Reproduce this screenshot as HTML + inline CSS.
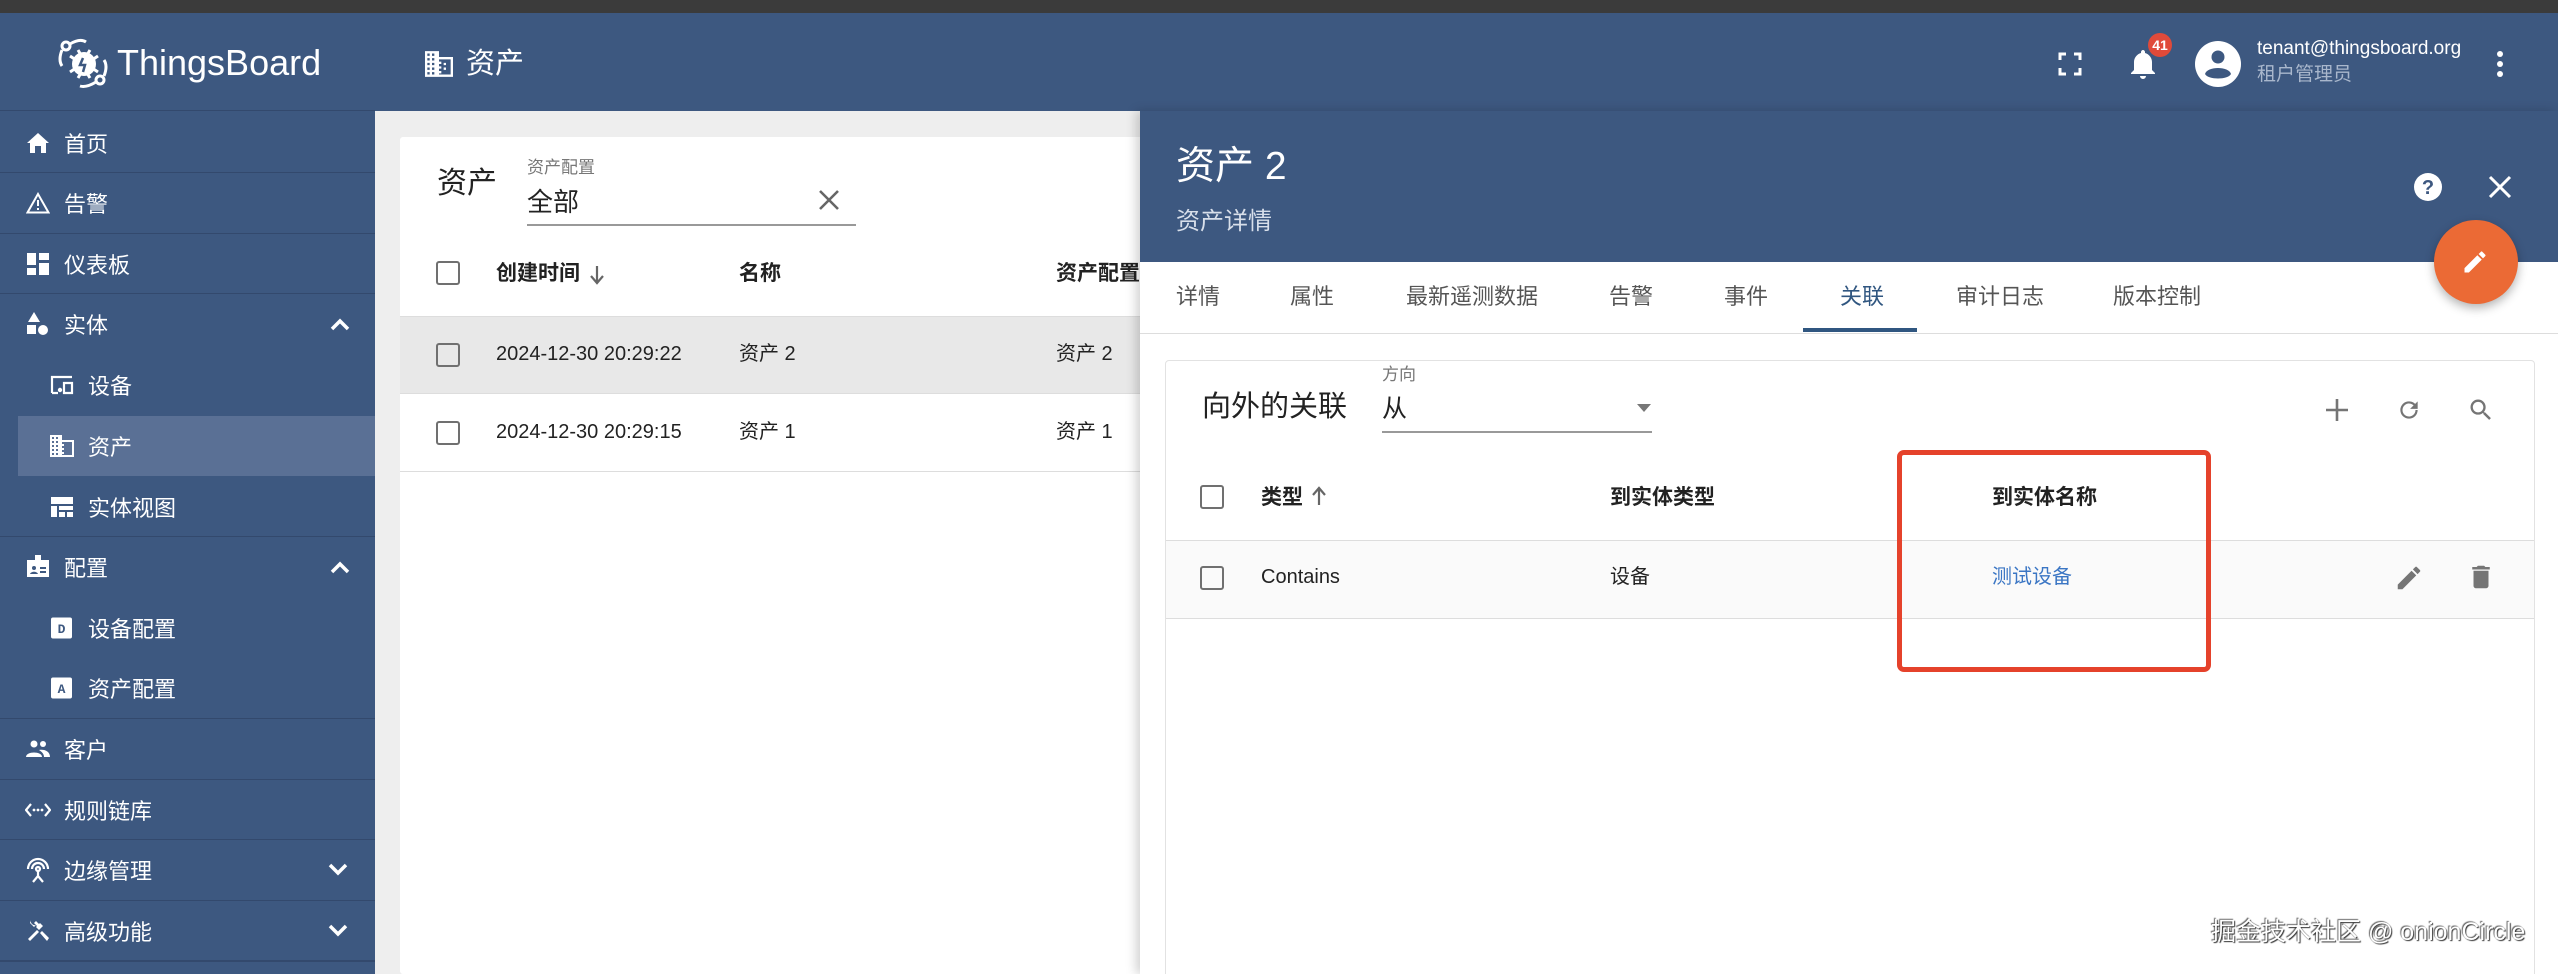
<!DOCTYPE html>
<html style="width:2558px;height:974px;overflow:hidden"><head><meta charset="utf-8"><style>
*{margin:0;padding:0;box-sizing:border-box}
body{width:2558px;height:974px;overflow:hidden;position:relative;background:#eee;font-family:"Liberation Sans","Noto Sans CJK SC",sans-serif;}
.a{position:absolute}
.t{position:absolute;white-space:nowrap;line-height:1}
.side{left:0;top:13px;width:375px;height:961px;background:#3d5880}
.mi{position:absolute;left:0;width:375px;height:61px;color:#fff;font-size:22px}
.mi .tx{position:absolute;left:64px;top:50%;transform:translateY(-50%)}
.mi.sub .tx{left:88px}
.mi svg{position:absolute;top:50%;transform:translateY(-50%)}
.div{border-top:1.5px solid #33496d}
.cb{position:absolute;width:24px;height:24px;border:2.5px solid #707070;border-radius:3px}
.g{fill:#757575}
</style></head><body>
<div class="a" style="left:0;top:0;width:2558px;height:13px;background:#3b3b3b"></div>
<div class="a" style="left:0;top:13px;width:2558px;height:98px;background:#3d5880"></div>
<div class="a side"></div>
<div class="a" style="left:0;top:110px;width:375px;height:1px;background:#33496d"></div>
<svg class="a" style="left:56px;top:36px" width="56" height="56" viewBox="0 0 56 56"><g fill="none" stroke="#fff" stroke-width="3"><circle cx="10" cy="10" r="4"/><circle cx="44" cy="44" r="4"/><path d="M14 8 Q24 2 30 6"/><path d="M6 14 Q2 24 6 30"/><path d="M48 40 Q52 30 48 24"/><path d="M40 46 Q30 52 24 50"/></g><circle cx="28" cy="28" r="12" fill="#fff"/><g stroke="#fff" stroke-width="3"><path d="M14 20l6 4M14 36l6-4M42 20l-6 4M42 36l-6-4M22 14l3 5M34 14l-3 5M22 42l3-5M34 42l-3-5"/></g><path d="M27 22l-3 7h5l-2 7" stroke="#3d5880" stroke-width="2.5" fill="none"/></svg>
<div class="t" style="left:117px;top:45px;font-size:36px;color:#fff">ThingsBoard</div>
<svg class="a" style="left:425px;top:51px" width="28" height="26" viewBox="0 0 24 22"><path fill="#fff" d="M0 22V0h12v5h12v17zM2 20h2v-2H2zm0-4h2v-2H2zm0-4h2v-2H2zm0-4h2V6H2zm0-4h2V2H2zm4 16h2v-2H6zm0-4h2v-2H6zm0-4h2v-2H6zm0-4h2V6H6zm0-4h2V2H6zm6 16h10V7H12v2h2v2h-2v2h2v2h-2v2h2v2h-2zm4-10h2v2h-2zm0 4h2v2h-2z"/></svg>
<div class="t" style="left:466px;top:50px;font-size:29px;color:#fff">资产</div>

<div class="mi" style="top:112px"><svg style="left:26px" width="24" height="22" viewBox="0 0 24 22"><path fill="#fff" d="M9 21v-7h6v7h5V11h3L12 1 1 11h3v10z"/></svg><span class="tx">首页</span></div>
<div class="mi div" style="top:172px"><svg style="left:26px" width="24" height="22" viewBox="0 0 24 22"><path fill="none" stroke="#fff" stroke-width="2" d="M12 2L1.5 20.5h21z"/><path fill="#fff" d="M11 8h2v6h-2zm0 8h2v2h-2z"/></svg><span class="tx">告警</span></div>
<div class="mi div" style="top:233px"><svg style="left:27px" width="22" height="22" viewBox="0 0 22 22"><path fill="#fff" d="M0 0h9v12H0zm12 0h10v7H12zM0 15h9v7H0zm12-5h10v12H12z"/></svg><span class="tx">仪表板</span></div>
<div class="mi div" style="top:293px"><svg style="left:27px" width="22" height="24" viewBox="0 0 22 24"><path fill="#fff" d="M7 0l6 10H1zM0 13h9v9H0zm16 0a5 5 0 110 10 5 5 0 010-10z"/></svg><span class="tx">实体</span><svg style="left:330px" width="20" height="14" viewBox="0 0 20 14"><path d="M2 12l8-8 8 8" stroke="#fff" stroke-width="3.5" fill="none"/></svg></div>
<div class="mi sub" style="top:354px"><svg style="left:50px" width="24" height="20" viewBox="0 0 24 20"><path fill="none" stroke="#fff" stroke-width="2.2" d="M2 18V2h20M8 18H2M14 8h8v10h-8z"/><circle cx="10" cy="15" r="2.2" fill="#fff"/></svg><span class="tx">设备</span></div>
<div class="a" style="left:18px;top:416px;width:357px;height:60px;background:#5a7095"></div>
<div class="mi sub" style="top:415px"><svg style="left:50px" width="24" height="22" viewBox="0 0 24 22"><path fill="#fff" d="M0 22V0h12v5h12v17zM2 20h2v-2H2zm0-4h2v-2H2zm0-4h2v-2H2zm0-4h2V6H2zm0-4h2V2H2zm4 16h2v-2H6zm0-4h2v-2H6zm0-4h2v-2H6zm0-4h2V6H6zm0-4h2V2H6zm6 16h10V7H12v2h2v2h-2v2h2v2h-2v2h2v2h-2z"/></svg><span class="tx">资产</span></div>
<div class="mi sub" style="top:476px"><svg style="left:51px" width="22" height="20" viewBox="0 0 22 20"><path fill="#fff" d="M0 0h22v7H0zm0 9h6v11H0zm8 0h14v4H8zm0 6h6v5H8zm8 0h6v5h-6z"/></svg><span class="tx">实体视图</span></div>
<div class="mi div" style="top:536px"><svg style="left:26px" width="24" height="24" viewBox="0 0 24 24"><path fill="#fff" d="M9 0h6v7H9z M1 5h22v17H1z"/><circle cx="8" cy="13" r="2" fill="#3d5880"/><path fill="#3d5880" d="M4 19c1-3 7-3 8 0zm10-7h6v2h-6zm0 4h6v2h-6z"/></svg><span class="tx">配置</span><svg style="left:330px" width="20" height="14" viewBox="0 0 20 14"><path d="M2 12l8-8 8 8" stroke="#fff" stroke-width="3.5" fill="none"/></svg></div>
<div class="mi sub" style="top:597px"><svg style="left:51px" width="21" height="21" viewBox="0 0 21 21"><rect width="21" height="21" rx="2" fill="#fff"/><text x="10.5" y="15.5" text-anchor="middle" font-size="13" font-weight="bold" fill="#3d5880" font-family="Liberation Mono">D</text></svg><span class="tx">设备配置</span></div>
<div class="mi sub" style="top:657px"><svg style="left:51px" width="21" height="21" viewBox="0 0 21 21"><rect width="21" height="21" rx="2" fill="#fff"/><text x="10.5" y="15.5" text-anchor="middle" font-size="13" font-weight="bold" fill="#3d5880" font-family="Liberation Mono">A</text></svg><span class="tx">资产配置</span></div>
<div class="mi div" style="top:718px"><svg style="left:26px" width="24" height="18" viewBox="0 0 24 18"><circle cx="8" cy="4" r="3.5" fill="#fff"/><circle cx="17" cy="4" r="3" fill="#fff"/><path fill="#fff" d="M0 17c0-6 16-6 16 0zm13-7c5-1 11 1 11 7h-6c0-3-2-5-5-7z"/></svg><span class="tx">客户</span></div>
<div class="mi div" style="top:779px"><svg style="left:25px" width="26" height="16" viewBox="0 0 26 16"><path d="M6 2L1 8l5 6M20 2l5 6-5 6" stroke="#fff" stroke-width="2.2" fill="none"/><circle cx="9" cy="8" r="1.4" fill="#fff"/><circle cx="13" cy="8" r="1.4" fill="#fff"/><circle cx="17" cy="8" r="1.4" fill="#fff"/></svg><span class="tx">规则链库</span></div>
<div class="mi div" style="top:839px"><svg style="left:25px" width="26" height="26" viewBox="0 0 26 26"><g fill="none" stroke="#fff" stroke-width="2.2"><path d="M3 12a10 10 0 0120 0M7 12a6 6 0 0112 0"/><circle cx="13" cy="12" r="2"/><path d="M13 14v5l-5 6M13 19l5 6"/></g></svg><span class="tx">边缘管理</span><svg style="left:328px" width="20" height="14" viewBox="0 0 20 14"><path d="M2 2l8 8 8-8" stroke="#fff" stroke-width="3.5" fill="none"/></svg></div>
<div class="mi div" style="top:900px"><svg style="left:26px" width="24" height="24" viewBox="0 0 24 24"><path fill="#fff" d="M2 20l9-9 2 2-9 9zM13 11l-3-3 1-1-3-3 2-2 3 3 1-1 3 3zM14 14l2-2 7 7-2 3z M5 1a4 4 0 005 5L8 8 4 4z"/></svg><span class="tx">高级功能</span><svg style="left:328px" width="20" height="14" viewBox="0 0 20 14"><path d="M2 2l8 8 8-8" stroke="#fff" stroke-width="3.5" fill="none"/></svg></div>
<div class="a" style="left:0;top:960px;width:375px;height:2px;background:#33496d"></div>

<div class="a" style="left:400px;top:137px;width:800px;height:837px;background:#fff;border-radius:3px"></div>
<div class="t" style="left:437px;top:169px;font-size:30px;color:#222">资产</div>
<div class="t" style="left:527px;top:159px;font-size:17px;color:#777">资产配置</div>
<div class="t" style="left:527px;top:189px;font-size:26px;color:#222">全部</div>
<svg class="a" style="left:818px;top:189px" width="22" height="22" viewBox="0 0 22 22"><path d="M2 2l18 18M20 2L2 20" stroke="#666" stroke-width="2.6"/></svg>
<div class="a" style="left:527px;top:224px;width:329px;height:2px;background:#999"></div>
<div class="cb" style="left:436px;top:261px"></div>
<div class="t" style="left:496px;top:263px;font-size:21px;color:#222;font-weight:bold">创建时间</div>
<svg class="a" style="left:589px;top:265px" width="16" height="20" viewBox="0 0 16 20"><path d="M8 1v16M2 11l6 7 6-7" stroke="#666" stroke-width="2.2" fill="none"/></svg>
<div class="t" style="left:739px;top:263px;font-size:21px;color:#222;font-weight:bold">名称</div>
<div class="t" style="left:1056px;top:263px;font-size:21px;color:#222;font-weight:bold">资产配置</div>
<div class="a" style="left:400px;top:316px;width:800px;height:78px;background:#e8e8e8;border-top:1px solid #ddd;border-bottom:1px solid #ddd"></div>
<div class="cb" style="left:436px;top:343px"></div>
<div class="t" style="left:496px;top:344px;font-size:20px;color:#222">2024-12-30 20:29:22</div>
<div class="t" style="left:739px;top:344px;font-size:20px;color:#222">资产 2</div>
<div class="t" style="left:1056px;top:344px;font-size:20px;color:#222">资产 2</div>
<div class="cb" style="left:436px;top:421px"></div>
<div class="t" style="left:496px;top:422px;font-size:20px;color:#222">2024-12-30 20:29:15</div>
<div class="t" style="left:739px;top:422px;font-size:20px;color:#222">资产 1</div>
<div class="t" style="left:1056px;top:422px;font-size:20px;color:#222">资产 1</div>
<div class="a" style="left:400px;top:471px;width:800px;height:1px;background:#ddd"></div>

<div class="a" style="left:1140px;top:111px;width:1418px;height:863px;background:#fff;box-shadow:-4px 0 10px rgba(0,0,0,.18)"></div>
<div class="a" style="left:1140px;top:111px;width:1418px;height:151px;background:#3d5880"></div>
<div class="t" style="left:1176px;top:147px;font-size:39px;color:#fff">资产 2</div>
<div class="t" style="left:1176px;top:210px;font-size:24px;color:#d8dfea">资产详情</div>
<svg class="a" style="left:2413px;top:172px" width="30" height="30" viewBox="0 0 30 30"><circle cx="15" cy="15" r="14" fill="#fff"/><text x="15" y="22" text-anchor="middle" font-size="20" font-weight="bold" fill="#3d5880" font-family="Liberation Sans">?</text></svg>
<svg class="a" style="left:2487px;top:174px" width="26" height="26" viewBox="0 0 26 26"><path d="M3 3l20 20M23 3L3 23" stroke="#fff" stroke-width="3"/></svg>
<svg class="a" style="left:2058px;top:52px" width="24" height="24" viewBox="0 0 24 24"><path d="M2 8V2h6M16 2h6v6M22 16v6h-6M8 22H2v-6" stroke="#fff" stroke-width="3" fill="none"/></svg>
<svg class="a" style="left:2129px;top:48px" width="28" height="32" viewBox="0 0 28 32"><path fill="#fff" d="M14 2c-1 0-2 1-2 2v1c-4 1-7 5-7 9v8l-3 3v1h24v-1l-3-3v-8c0-4-3-8-7-9V4c0-1-1-2-2-2zM11 28h6a3 3 0 01-6 0z"/></svg>
<div class="a" style="left:2148px;top:33px;width:24px;height:24px;border-radius:50%;background:#e04a3a;color:#fff;font-size:14px;font-weight:bold;text-align:center;line-height:24px">41</div>
<svg class="a" style="left:2195px;top:41px" width="46" height="46" viewBox="0 0 46 46"><circle cx="23" cy="23" r="23" fill="#fff"/><circle cx="23" cy="16" r="6.5" fill="#3d5880"/><path fill="#3d5880" d="M10 33c2-8 24-8 26 0-3 6-23 6-26 0z"/></svg>
<div class="t" style="left:2257px;top:39px;font-size:19px;color:#fff">tenant@thingsboard.org</div>
<div class="t" style="left:2257px;top:65px;font-size:19px;color:#a9b7cc">租户管理员</div>
<svg class="a" style="left:2494px;top:50px" width="12" height="28" viewBox="0 0 12 28"><circle cx="6" cy="4" r="3" fill="#fff"/><circle cx="6" cy="14" r="3" fill="#fff"/><circle cx="6" cy="24" r="3" fill="#fff"/></svg>
<div class="t" style="left:1176px;top:286px;font-size:22px;color:#555">详情</div>
<div class="t" style="left:1290px;top:286px;font-size:22px;color:#555">属性</div>
<div class="t" style="left:1406px;top:286px;font-size:22px;color:#555">最新遥测数据</div>
<div class="t" style="left:1609px;top:286px;font-size:22px;color:#555">告警</div>
<div class="t" style="left:1724px;top:286px;font-size:22px;color:#555">事件</div>
<div class="t" style="left:1840px;top:286px;font-size:22px;color:#305680">关联</div>
<div class="t" style="left:1956px;top:286px;font-size:22px;color:#555">审计日志</div>
<div class="t" style="left:2113px;top:286px;font-size:22px;color:#555">版本控制</div>
<div class="a" style="left:1803px;top:328px;width:114px;height:4px;background:#305680"></div>
<div class="a" style="left:1140px;top:333px;width:1418px;height:1px;background:#ddd"></div>
<div class="a" style="left:2434px;top:220px;width:84px;height:84px;border-radius:50%;background:#eb6a35;box-shadow:0 4px 10px rgba(0,0,0,.3)"></div>
<svg class="a" style="left:2461px;top:248px" width="28" height="28" viewBox="0 0 24 24"><path fill="#fff" d="M3 17.25V21h3.75L17.8 9.94l-3.75-3.75zM20.7 7.04a1 1 0 000-1.41l-2.34-2.34a1 1 0 00-1.41 0l-1.83 1.83 3.75 3.75z"/></svg>
<div class="a" style="left:1165px;top:360px;width:1370px;height:620px;border:1px solid #e2e2e2;border-radius:4px;background:#fff"></div>
<div class="t" style="left:1202px;top:393px;font-size:29px;color:#222">向外的关联</div>
<div class="t" style="left:1382px;top:366px;font-size:17px;color:#777">方向</div>
<div class="t" style="left:1382px;top:397px;font-size:25px;color:#222">从</div>
<svg class="a" style="left:1636px;top:403px" width="16" height="10" viewBox="0 0 16 10"><path d="M1 1h14L8 9z" fill="#777"/></svg>
<div class="a" style="left:1382px;top:431px;width:270px;height:2px;background:#999"></div>
<svg class="a" style="left:2324px;top:397px" width="26" height="26" viewBox="0 0 26 26"><path d="M13 2v22M2 13h22" stroke="#757575" stroke-width="2.6"/></svg>
<svg class="a" style="left:2396px;top:397px" width="26" height="26" viewBox="0 0 24 24"><path class="g" d="M17.65 6.35A7.96 7.96 0 0012 4a8 8 0 108 8h-2a6 6 0 11-1.76-4.24L13 11h7V4z"/></svg>
<svg class="a" style="left:2467px;top:396px" width="28" height="28" viewBox="0 0 24 24"><path class="g" d="M15.5 14h-.79l-.28-.27A6.470 6.470 0 0016 9.5 6.5 6.5 0 109.5 16c1.61 0 3.09-.59 4.230-1.57l.27.28v.79l5 4.99L20.49 19zm-6 0C7.01 14 5 11.99 5 9.5S7.01 5 9.5 5 14 7.01 14 9.5 11.99 14 9.5 14z"/></svg>
<div class="cb" style="left:1200px;top:485px"></div>
<div class="t" style="left:1261px;top:487px;font-size:21px;color:#222;font-weight:bold">类型</div>
<svg class="a" style="left:1311px;top:486px" width="16" height="20" viewBox="0 0 16 20"><path d="M8 19V3M2 9l6-7 6 7" stroke="#666" stroke-width="2.2" fill="none"/></svg>
<div class="t" style="left:1610px;top:487px;font-size:21px;color:#222;font-weight:bold">到实体类型</div>
<div class="t" style="left:1992px;top:487px;font-size:21px;color:#222;font-weight:bold">到实体名称</div>
<div class="a" style="left:1166px;top:540px;width:1368px;height:1px;background:#ddd"></div>
<div class="a" style="left:1166px;top:541px;width:1368px;height:77px;background:#fafafa"></div>
<div class="cb" style="left:1200px;top:566px"></div>
<div class="t" style="left:1261px;top:567px;font-size:20px;color:#222">Contains</div>
<div class="t" style="left:1610px;top:567px;font-size:20px;color:#222">设备</div>
<div class="t" style="left:1992px;top:567px;font-size:20px;color:#3b76c4">测试设备</div>
<svg class="a" style="left:2394px;top:563px" width="30" height="30" viewBox="0 0 24 24"><path class="g" d="M3 17.25V21h3.75L17.8 9.94l-3.75-3.75zM20.7 7.04a1 1 0 000-1.41l-2.34-2.34a1 1 0 00-1.41 0l-1.83 1.83 3.75 3.75z"/></svg>
<svg class="a" style="left:2466px;top:561px" width="30" height="32" viewBox="0 0 24 24"><path class="g" d="M6 19c0 1.1.9 2 2 2h8c1.1 0 2-.9 2-2V7H6zM19 4h-3.5l-1-1h-5l-1 1H5v2h14z"/></svg>
<div class="a" style="left:1166px;top:618px;width:1368px;height:1px;background:#ddd"></div>
<div class="a" style="left:1897px;top:450px;width:314px;height:222px;border:5px solid #e5422b;border-radius:7px"></div>
<div class="t" style="left:2211px;top:920px;font-size:25px;color:#fff;text-shadow:1px 1px 1px #333,-1px -1px 1px #666">掘金技术社区 @ onionCircle</div>
</body></html>
